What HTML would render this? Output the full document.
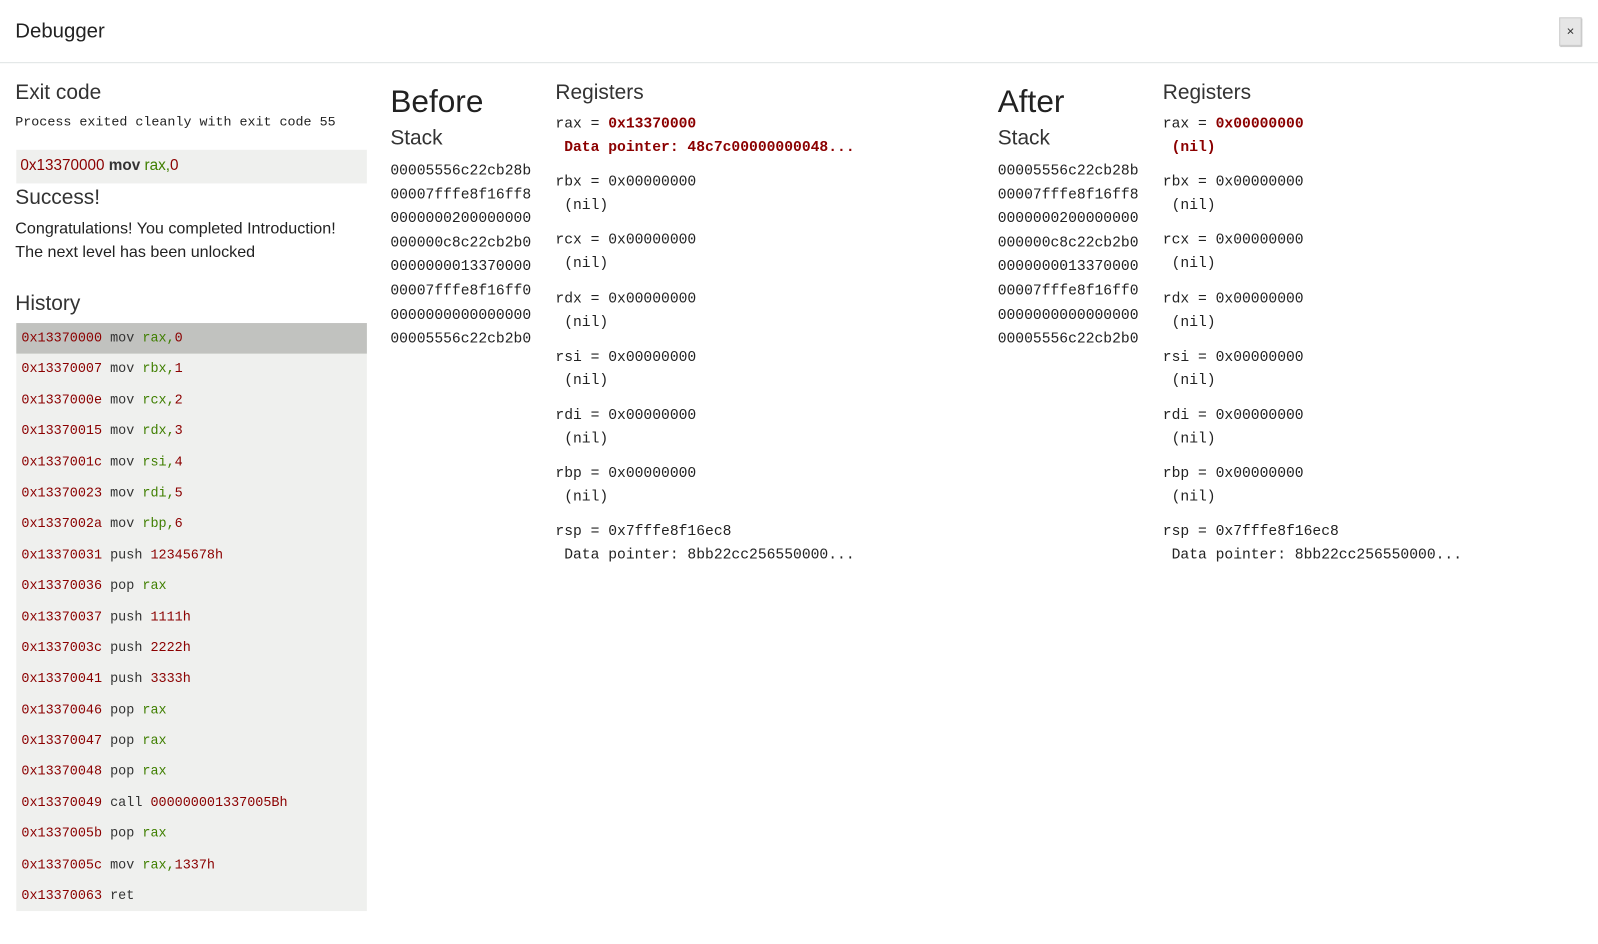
<!DOCTYPE html>
<html><head><meta charset="utf-8"><style>
*{margin:0;padding:0;box-sizing:border-box}
body{width:1598px;height:944px;background:#fff;font-family:"Liberation Sans",sans-serif;color:#222;position:relative;overflow:hidden}
#w{position:absolute;left:0;top:0;width:1568px;height:926px;transform:scale(1.0191);transform-origin:0 0}
.a{position:absolute;white-space:pre}
.m{font-family:"Liberation Mono",monospace}
.r{color:#8b0000}.g{color:#3f7f00}.k{color:#333}
.hist{position:absolute;left:16px;top:317px;width:344px;height:577px;background:#eff0ee}
.row{height:30.4px;line-height:30.4px;padding-left:5px;font-family:"Liberation Mono",monospace;font-size:13.2px;white-space:pre;color:#333}
.row.sel{background:#c1c2bf}
.stk{white-space:normal}
.stk div{height:23.6px;line-height:23.6px}
.reg{font-size:14.4px;line-height:23px;color:#222;white-space:normal}
.reg div{height:57.2px;white-space:nowrap}
</style></head><body><div id="w">
<div class="a" style="left:15px;top:20px;font-size:20px;color:#222">Debugger</div>
<div class="a" style="left:1530px;top:17px;width:22px;height:28px;background:#e6e6e6;border:1px solid #ccc;box-shadow:1px 1px 1px #999;font-size:13px;line-height:26px;text-align:center;color:#333">×</div>
<div class="a" style="left:0;top:61px;width:1568px;height:1px;background:#dfe4e4"></div>

<div class="a" style="left:15px;top:79px;font-size:20.5px;color:#333">Exit code</div>
<div class="a m" style="left:15px;top:112px;font-size:13.1px">Process exited cleanly with exit code 55</div>
<div class="a" style="left:16px;top:147px;width:344px;height:33px;background:#eff0ee"></div>
<div class="a" style="left:20px;top:154px;font-size:15px"><span class="r">0x13370000</span> <b class="k">mov</b> <span class="g">rax,</span><span class="r">0</span></div>
<div class="a" style="left:15px;top:182px;font-size:20.5px;color:#333">Success!</div>
<div class="a" style="left:15px;top:213px;font-size:15.8px;line-height:23px">Congratulations! You completed Introduction!
The next level has been unlocked</div>
<div class="a" style="left:15px;top:286px;font-size:20.5px;color:#333">History</div>
<div class="hist">
<div class="row sel"><span class="r">0x13370000</span> mov <span class="g">rax,</span><span class="r">0</span></div>
<div class="row"><span class="r">0x13370007</span> mov <span class="g">rbx,</span><span class="r">1</span></div>
<div class="row"><span class="r">0x1337000e</span> mov <span class="g">rcx,</span><span class="r">2</span></div>
<div class="row"><span class="r">0x13370015</span> mov <span class="g">rdx,</span><span class="r">3</span></div>
<div class="row"><span class="r">0x1337001c</span> mov <span class="g">rsi,</span><span class="r">4</span></div>
<div class="row"><span class="r">0x13370023</span> mov <span class="g">rdi,</span><span class="r">5</span></div>
<div class="row"><span class="r">0x1337002a</span> mov <span class="g">rbp,</span><span class="r">6</span></div>
<div class="row"><span class="r">0x13370031</span> push <span class="r">12345678h</span></div>
<div class="row"><span class="r">0x13370036</span> pop <span class="g">rax</span></div>
<div class="row"><span class="r">0x13370037</span> push <span class="r">1111h</span></div>
<div class="row"><span class="r">0x1337003c</span> push <span class="r">2222h</span></div>
<div class="row"><span class="r">0x13370041</span> push <span class="r">3333h</span></div>
<div class="row"><span class="r">0x13370046</span> pop <span class="g">rax</span></div>
<div class="row"><span class="r">0x13370047</span> pop <span class="g">rax</span></div>
<div class="row"><span class="r">0x13370048</span> pop <span class="g">rax</span></div>
<div class="row"><span class="r">0x13370049</span> call <span class="r">000000001337005Bh</span></div>
<div class="row"><span class="r">0x1337005b</span> pop <span class="g">rax</span></div>
<div class="row"><span class="r">0x1337005c</span> mov <span class="g">rax,</span><span class="r">1337h</span></div>
<div class="row"><span class="r">0x13370063</span> ret</div>
</div>

<div class="a" style="left:383px;top:82px;font-size:31px;color:#222">Before</div>
<div class="a" style="left:383px;top:124px;font-size:20.5px;color:#333">Stack</div>
<div class="a m stk" style="left:383px;top:157px;font-size:14.4px"><div>00005556c22cb28b</div><div>00007fffe8f16ff8</div><div>0000000200000000</div><div>000000c8c22cb2b0</div><div>0000000013370000</div><div>00007fffe8f16ff0</div><div>0000000000000000</div><div>00005556c22cb2b0</div></div>
<div class="a" style="left:545px;top:79px;font-size:20.5px;color:#333">Registers</div>
<div class="a m reg" style="left:545px;top:111px"><div>rax = <b class="r">0x13370000</b><br><b class="r">&nbsp;Data pointer: 48c7c00000000048...</b></div><div>rbx = 0x00000000<br>&nbsp;(nil)</div><div>rcx = 0x00000000<br>&nbsp;(nil)</div><div>rdx = 0x00000000<br>&nbsp;(nil)</div><div>rsi = 0x00000000<br>&nbsp;(nil)</div><div>rdi = 0x00000000<br>&nbsp;(nil)</div><div>rbp = 0x00000000<br>&nbsp;(nil)</div><div>rsp = 0x7fffe8f16ec8<br>&nbsp;Data pointer: 8bb22cc256550000...</div></div>

<div class="a" style="left:979px;top:82px;font-size:31px;color:#222">After</div>
<div class="a" style="left:979px;top:124px;font-size:20.5px;color:#333">Stack</div>
<div class="a m stk" style="left:979px;top:157px;font-size:14.4px"><div>00005556c22cb28b</div><div>00007fffe8f16ff8</div><div>0000000200000000</div><div>000000c8c22cb2b0</div><div>0000000013370000</div><div>00007fffe8f16ff0</div><div>0000000000000000</div><div>00005556c22cb2b0</div></div>
<div class="a" style="left:1141px;top:79px;font-size:20.5px;color:#333">Registers</div>
<div class="a m reg" style="left:1141px;top:111px"><div>rax = <b class="r">0x00000000</b><br><b class="r">&nbsp;(nil)</b></div><div>rbx = 0x00000000<br>&nbsp;(nil)</div><div>rcx = 0x00000000<br>&nbsp;(nil)</div><div>rdx = 0x00000000<br>&nbsp;(nil)</div><div>rsi = 0x00000000<br>&nbsp;(nil)</div><div>rdi = 0x00000000<br>&nbsp;(nil)</div><div>rbp = 0x00000000<br>&nbsp;(nil)</div><div>rsp = 0x7fffe8f16ec8<br>&nbsp;Data pointer: 8bb22cc256550000...</div></div>
</div></body></html>
